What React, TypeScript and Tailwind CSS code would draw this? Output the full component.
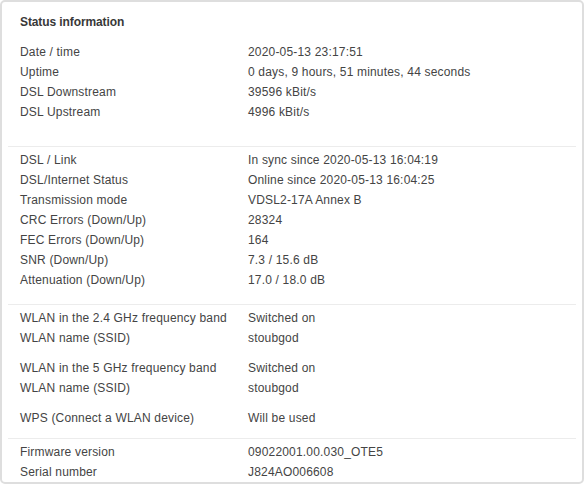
type Row = [string, string];

const section1: Row[] = [
  ["Date / time", "2020-05-13 23:17:51"],
  ["Uptime", "0 days, 9 hours, 51 minutes, 44 seconds"],
  ["DSL Downstream", "39596 kBit/s"],
  ["DSL Upstream", "4996 kBit/s"],
];

const section2: Row[] = [
  ["DSL / Link", "In sync since 2020-05-13 16:04:19"],
  ["DSL/Internet Status", "Online since 2020-05-13 16:04:25"],
  ["Transmission mode", "VDSL2-17A Annex B"],
  ["CRC Errors (Down/Up)", "28324"],
  ["FEC Errors (Down/Up)", "164"],
  ["SNR (Down/Up)", "7.3 / 15.6 dB"],
  ["Attenuation (Down/Up)", "17.0 / 18.0 dB"],
];

const wlan24: Row[] = [
  ["WLAN in the 2.4 GHz frequency band", "Switched on"],
  ["WLAN name (SSID)", "stoubgod"],
];

const wlan5: Row[] = [
  ["WLAN in the 5 GHz frequency band", "Switched on"],
  ["WLAN name (SSID)", "stoubgod"],
];

const wps: Row[] = [["WPS (Connect a WLAN device)", "Will be used"]];

const device: Row[] = [
  ["Firmware version", "09022001.00.030_OTE5"],
  ["Serial number", "J824AO006608"],
];

function Rows({ rows }: { rows: Row[] }) {
  return (
    <div>
      {rows.map(([label, value], i) => (
        <div key={i} className="flex h-5 items-center">
          <span className="w-[238px] shrink-0 pl-[10px]">{label}</span>
          <span>{value}</span>
        </div>
      ))}
    </div>
  );
}

// thin divider between groups
const Divider = () => <div className="mx-[-2px] h-px bg-[#ececec]" />;

export default function App() {
  return (
    <div className="bg-white p-0">
      <div
        className="w-[584px] h-[484px] rounded-[5px] border-2 border-[#dedede] bg-white px-2 text-[12px] tracking-[0.18px] text-[#444] overflow-hidden"
        style={{ fontFamily: '"Liberation Sans", Arial, sans-serif' }}
      >
        <h2 className="mt-[10px] flex h-5 items-center pl-[10px] text-[12px] font-bold tracking-[-0.1px] text-[#383838]">
          Status information
        </h2>

        <div className="mt-[10px]">
          <Rows rows={section1} />
        </div>

        <div className="mt-6">
          <Divider />
          <div className="mt-[3px]">
            <Rows rows={section2} />
          </div>
        </div>

        <div className="mt-[14px]">
          <Divider />
          <div className="mt-[3px] flex flex-col gap-[10px]">
            <Rows rows={wlan24} />
            <Rows rows={wlan5} />
            <Rows rows={wps} />
          </div>
        </div>

        <div className="mt-[10px]">
          <Divider />
          <div className="mt-[3px]">
            <Rows rows={device} />
          </div>
        </div>
      </div>
    </div>
  );
}
